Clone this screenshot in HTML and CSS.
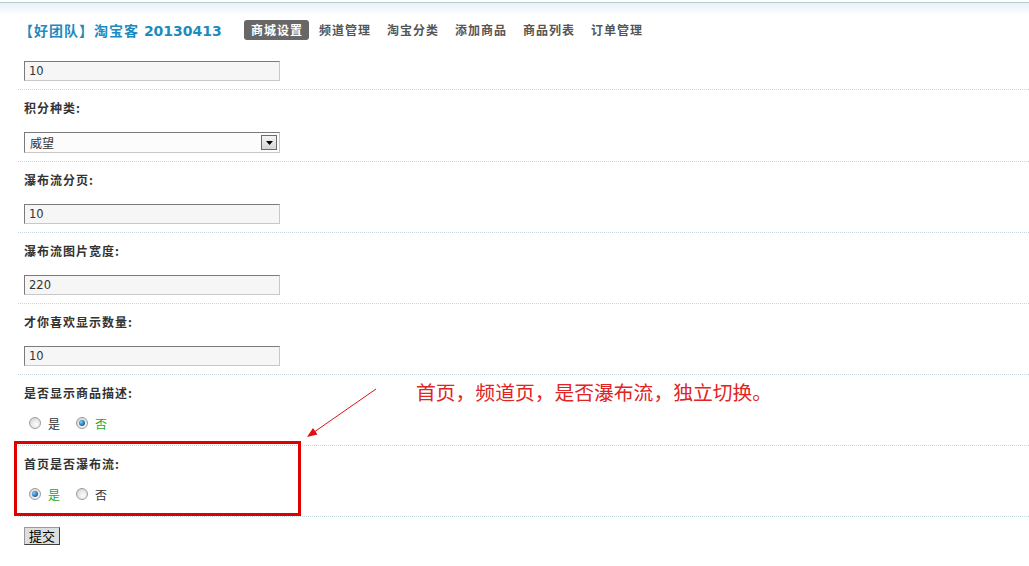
FILE: index.html
```html
<!DOCTYPE html>
<html lang="zh-CN">
<head>
<meta charset="utf-8">
<title>商城设置</title>
<link rel="stylesheet" href="styles.css">
</head>
<body>
<div class="page">
  <header class="header">
    <h1 class="title"><span class="title-cn">【好团队】淘宝客</span> <span class="title-num">20130413</span></h1>
    <nav class="nav">
      <a class="nav-item active">商城设置</a>
      <a class="nav-item">频道管理</a>
      <a class="nav-item">淘宝分类</a>
      <a class="nav-item">添加商品</a>
      <a class="nav-item">商品列表</a>
      <a class="nav-item">订单管理</a>
    </nav>
  </header>

  <form class="form">
    <div class="item first">
      <div class="field"><input class="text" type="text" value="10"></div>
    </div>
    <div class="item">
      <div class="label">积分种类:</div>
      <div class="field">
        <div class="select-wrap">
          <select class="select"><option>威望</option></select>
          <span class="select-btn"><svg width="7" height="4" viewBox="0 0 7 4"><path d="M0 0h7L3.5 4z" fill="#000"/></svg></span>
        </div>
      </div>
    </div>
    <div class="item">
      <div class="label">瀑布流分页:</div>
      <div class="field"><input class="text" type="text" value="10"></div>
    </div>
    <div class="item">
      <div class="label">瀑布流图片宽度:</div>
      <div class="field"><input class="text" type="text" value="220"></div>
    </div>
    <div class="item">
      <div class="label">才你喜欢显示数量:</div>
      <div class="field"><input class="text" type="text" value="10"></div>
    </div>
    <div class="item">
      <div class="label">是否显示商品描述:</div>
      <div class="field radios">
        <label class="opt"><span class="radio"></span>是</label>
        <label class="opt on"><span class="radio checked"></span>否</label>
      </div>
    </div>
    <div class="item">
      <div class="label">首页是否瀑布流:</div>
      <div class="field radios">
        <label class="opt on"><span class="radio checked"></span>是</label>
        <label class="opt"><span class="radio"></span>否</label>
      </div>
    </div>
    <div class="submit-row"><button class="btn" type="button">提交</button></div>
  </form>

  <div class="note">首页，频道页，是否瀑布流，独立切换。</div>
  <svg class="arrow" width="1029" height="566" viewBox="0 0 1029 566">
    <line x1="376" y1="389" x2="312" y2="433.5" stroke="#e01010" stroke-width="1"/>
    <polygon points="307,437 317.5,434.5 313,428" fill="#e01010"/>
  </svg>
  <div class="highlight"></div>
</div>
</body>
</html>
```

FILE: styles.css
```css
html, body {
  margin: 0;
  padding: 0;
}

body {
  background: #fff linear-gradient(to bottom, #fff 0, #fff 2px, #b4ced5 2px, #b4ced5 3px, #e6f1f9 3px, #fff 15px) no-repeat;
  background-size: 100% 15px;
  font-family: "DejaVu Sans", "Noto Sans CJK SC", sans-serif;
  font-size: 12px;
  color: #333;
}

.page {
  position: relative;
  width: 1029px;
  height: 566px;
  overflow: hidden;
}

.header {
  display: flex;
  align-items: center;
  padding: 20px 0 0 19px;
  height: 20px;
}

.title {
  margin: 0;
  width: 225px;
  font-size: 14px;
  font-weight: bold;
  color: #1d8bbf;
  line-height: 20px;
  white-space: nowrap;
}

.title-cn {
  font-family: "Noto Sans CJK SC", sans-serif;
  letter-spacing: 1px;
}

.title-num {
  font-family: "DejaVu Sans", sans-serif;
}

.nav {
  display: flex;
  gap: 3px;
}

.nav-item {
  display: block;
  height: 20px;
  line-height: 20px;
  padding: 0 6px 0 7px;
  border-radius: 3px;
  font-family: "Noto Sans CJK SC", sans-serif;
  font-size: 12px;
  font-weight: bold;
  letter-spacing: 1px;
  color: #555;
}

.nav-item.active {
  background: #676767;
  color: #fff;
}

.form {
  margin: 0 0 0 18px;
}

.item {
  padding: 9px 0 8px 6px;
  border-bottom: 1px dotted #c3d9df;
}

.item.first {
  padding-top: 21px;
}

.label {
  height: 18px;
  line-height: 18px;
  font-weight: bold;
  color: #333;
  letter-spacing: 1px;
  font-family: "Noto Sans CJK SC", sans-serif;
}

.field {
  margin-top: 15px;
}

.item.first .field {
  margin-top: 0;
}

.text {
  display: block;
  box-sizing: border-box;
  width: 256px;
  height: 20px;
  margin: 0;
  padding: 0 4px;
  border: 1px solid;
  border-color: #7b7b7b #c8c8c8 #c8c8c8 #7b7b7b;
  background: #f6f6f6;
  font-family: "DejaVu Sans", sans-serif;
  font-size: 11.5px;
  color: #333;
  outline: none;
}

.select-wrap {
  position: relative;
  width: 256px;
  height: 21px;
}

.select {
  display: block;
  box-sizing: border-box;
  width: 256px;
  height: 21px;
  margin: 0;
  padding: 0 5px;
  border: 1px solid;
  border-color: #7b7b7b #c8c8c8 #c8c8c8 #7b7b7b;
  border-radius: 0;
  background: #fcfcfc;
  -webkit-appearance: none;
  appearance: none;
  font-family: "Noto Sans CJK SC", sans-serif;
  font-size: 12px;
  color: #333;
}

.select-btn {
  position: absolute;
  top: 3px;
  right: 3px;
  box-sizing: border-box;
  width: 16px;
  height: 15px;
  border: 1px solid #6a6a6a;
  background: linear-gradient(#f4f4f4, #d6d6d6);
  display: flex;
  align-items: center;
  justify-content: center;
}

.radios {
  margin-top: 11px;
  height: 20px;
  padding-bottom: 4px;
  display: flex;
  align-items: center;
}

.opt {
  display: flex;
  align-items: center;
  margin-right: 11px;
  font-family: "Noto Sans CJK SC", sans-serif;
  font-size: 12px;
  color: #333;
}

.opt.on {
  color: #22aa22;
}

.radio {
  box-sizing: border-box;
  width: 12px;
  height: 12px;
  margin: 0 7px 0 5px;
  border: 1px solid #9c9c9c;
  border-radius: 50%;
  background: radial-gradient(circle at 60% 65%, #fdfdfd 0, #e9e9e9 45%, #c9c9c9 100%);
  display: flex;
  align-items: center;
  justify-content: center;
}

.radio.checked::after {
  content: "";
  width: 6px;
  height: 6px;
  border-radius: 50%;
  background: radial-gradient(circle at 35% 35%, #8fd0f5 0, #2f84c4 45%, #0f3f78 100%);
}

.submit-row {
  padding: 10px 0 0 6px;
}

.btn {
  display: block;
  box-sizing: border-box;
  width: 36px;
  height: 18px;
  margin: 0;
  padding: 0;
  border: 1px solid;
  border-color: #9a9a9a #404040 #404040 #9a9a9a;
  border-radius: 0;
  background: #dedede;
  font-family: "Noto Sans CJK SC", sans-serif;
  font-size: 13px;
  line-height: 16px;
  color: #000;
}

.note {
  position: absolute;
  left: 416px;
  top: 380px;
  font-family: "Noto Sans CJK SC", sans-serif;
  font-size: 19.8px;
  line-height: 24px;
  color: #e02424;
  white-space: nowrap;
}

.arrow {
  position: absolute;
  left: 0;
  top: 0;
  pointer-events: none;
}

.highlight {
  position: absolute;
  left: 14px;
  top: 441px;
  width: 281px;
  height: 69px;
  border: 3px solid #e00000;
  pointer-events: none;
}
```
